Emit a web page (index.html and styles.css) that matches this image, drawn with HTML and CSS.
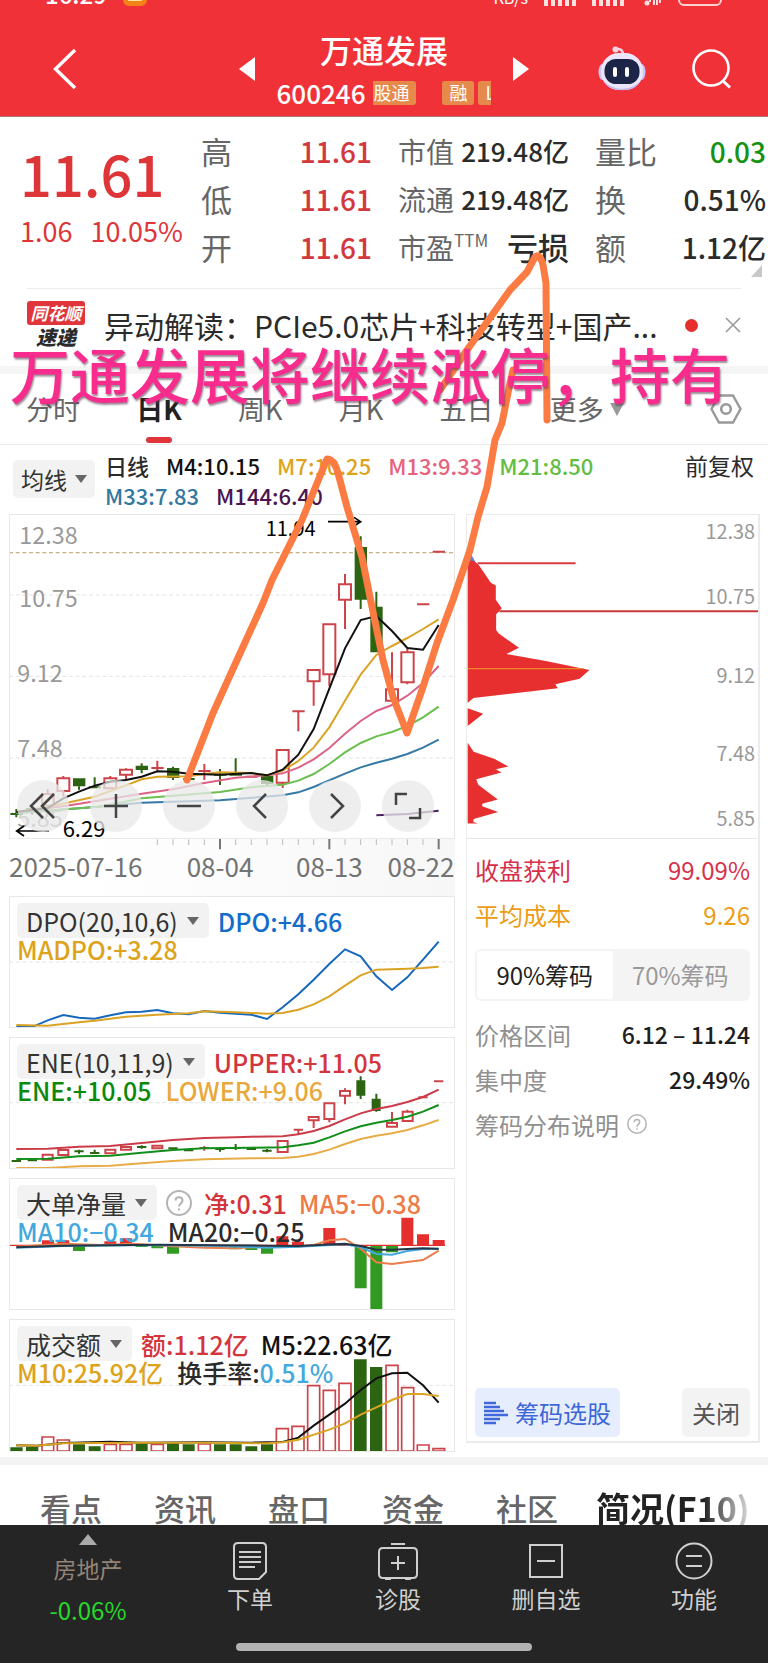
FILE: index.html
```html
<!DOCTYPE html>
<html lang="zh-CN">
<head>
<meta charset="utf-8">
<meta name="viewport" content="width=device-width, initial-scale=1">
<title>万通发展 600246</title>
<link rel="stylesheet" href="styles.css">
</head>
<body>
<div class="app">
<header class="header">
  <div class="status">
    <span class="clock">16:29</span>
    <span class="app-dot"></span>
    <span class="net">KB/s</span>
    <span class="signal"><i></i><i></i><i></i><i></i><i></i></span>
    <span class="signal"><i></i><i></i><i></i><i></i><i></i></span>
    <svg class="wifi" width="22" height="8" viewBox="0 0 22 8"><path d="M2 1h4M10 0v4M14 2v5M17 1v6M20 1v4" stroke="#ffe0e0" stroke-width="2"/><circle cx="7" cy="5" r="2.500" fill="#ffe0e0"/></svg>
    <span class="battery"></span>
  </div>
  <div class="titlebar">
    <button class="icon-btn back" aria-label="返回"><svg width="24" height="42" viewBox="0 0 24 42"><path d="M22 2 2.500 21 22 40" fill="none" stroke="#fff" stroke-width="3.400"/></svg></button>
    <div class="stock">
      <button class="icon-btn" aria-label="上一只"><svg width="16" height="24" viewBox="0 0 16 24"><path d="M16 0v24L0 12z" fill="#fff"/></svg></button>
      <div class="stock-name">
        <h1>万通发展</h1>
        <div class="code-row"><span>600246</span><span class="ribbon"><b class="tag cut-left">股通</b><b class="tag apart">融</b><b class="tag cut-right">L</b></span></div>
      </div>
      <button class="icon-btn" aria-label="下一只"><svg width="16" height="24" viewBox="0 0 16 24"><path d="M0 0v24l16-12z" fill="#fff"/></svg></button>
    </div>
    <div class="actions">
      <button class="icon-btn" aria-label="助手"><svg width="48" height="46" viewBox="0 0 48 46">
        <path d="M25 9c0-4-2-6-5-6" fill="none" stroke="#f6cfe4" stroke-width="2.500"/><circle cx="17.500" cy="3.500" r="3" fill="#fbd7e6"/>
        <ellipse cx="4.500" cy="26" rx="4" ry="8" fill="#c9c4f6"/><ellipse cx="43.500" cy="26" rx="4" ry="8" fill="#c9c4f6"/>
        <rect x="3" y="7" width="42" height="37" rx="18" fill="#ece6fb"/><path d="M7 36c8 9 26 9 34 0-3 11-31 11-34 0z" fill="#c3b6f2"/>
        <rect x="6.500" y="13" width="35" height="25" rx="11.500" fill="#1c2548"/><rect x="15" y="21" width="4" height="10" rx="2" fill="#fff"/><rect x="27" y="21" width="4" height="10" rx="2" fill="#fff"/></svg></button>
      <button class="icon-btn" aria-label="搜索"><svg width="40" height="40" viewBox="0 0 40 40"><circle cx="19" cy="19" r="17.500" fill="none" stroke="#fff" stroke-width="2.600"/><path d="m31 32 7 6.500" stroke="#fff" stroke-width="3"/></svg></button>
    </div>
  </div>
</header>

<section class="quote">
  <div class="price"><strong>11.61</strong><p><span>1.06</span><span>10.05%</span></p></div>
  <dl class="stats">
    <div><dt>高</dt><dd class="up">11.61</dd></div>
    <div><dt>低</dt><dd class="up">11.61</dd></div>
    <div><dt>开</dt><dd class="up">11.61</dd></div>
  </dl>
  <dl class="stats mid">
    <div><dt>市值</dt><dd>219.48亿</dd></div>
    <div><dt>流通</dt><dd>219.48亿</dd></div>
    <div><dt>市盈<sup>TTM</sup></dt><dd class="word">亏损</dd></div>
  </dl>
  <dl class="stats">
    <div><dt>量比</dt><dd class="down">0.03</dd></div>
    <div><dt>换</dt><dd>0.51%</dd></div>
    <div><dt>额</dt><dd>1.12亿</dd></div>
  </dl>
  <svg class="corner" width="11" height="12" viewBox="0 0 11 12"><path d="M11 0v12H0z" fill="#c8c8c8"/></svg>
</section>

<section class="news">
  <div class="news-logo"><span>同花顺</span><em>速递</em></div>
  <a href="#news">异动解读：PCIe5.0芯片+科技转型+国产...</a>
  <span class="dot"></span>
  <button class="icon-btn" aria-label="关闭资讯"><svg width="16" height="16" viewBox="0 0 16 16"><path d="m1 1 14 14M15 1 1 15" stroke="#999" stroke-width="1.600"/></svg></button>
</section>

<nav class="periods">
  <button>分时</button><button class="on">日K</button><button>周K</button><button>月K</button><button>五日</button><button class="more">更多<svg width="14" height="13" viewBox="0 0 14 13"><path d="M0 0h14L7 13z" fill="#999"/></svg></button>
  <button class="gear" aria-label="设置"><svg width="32" height="30" viewBox="0 0 32 30"><path d="M9 1.500h14L30.500 15 23 28.500H9L1.500 15z" fill="none" stroke="#999" stroke-width="2.400"/><circle cx="16" cy="15" r="4.800" fill="none" stroke="#999" stroke-width="2.600"/></svg></button>
</nav>

<section class="averages">
  <button class="pick">均线<i></i></button>
  <p><span>日线</span><span class="c-black">M4:10.15</span><span class="c-gold">M7:10.25</span><span class="c-pink">M13:9.33</span><span class="c-lime">M21:8.50</span><span class="c-steel">M33:7.83</span><span class="c-plum">M144:6.40</span></p>
  <button class="adjust">前复权</button>
</section>

<main class="board">
  <div class="charts">
    <figure class="panel kline">
      <svg viewBox="27 40 1338 975">
        <g class="grid"><path d="M27 283h1338M27 527h1338M27 772h1338"/></g>
        <path d="M27 156h1338" fill="none" stroke="#c9b184" stroke-width="4" stroke-dasharray="12 8"/>
        <g class="axis"><text x="58" y="131">12.38</text><text x="58" y="320">10.75</text><text x="52" y="545">9.12</text><text x="52" y="769">7.48</text><text x="52" y="978">5.85</text></g>
        <g class="wick green"><path d="M49 925v25M31 940h37M96 922v20M237 857v10M284 830v32M266 860h37M425 788v30M519 798v40M550 835h34M660 805v48M642 822h37M707 773v50M689 822h37M801 850v6M1082 107v218M1129 273v60"/></g>
        <g class="solid"><path d="M78 922h37v14H78zM219 833h37v24h-37zM407 795h37v13h-37zM501 802h37v30h-37zM783 825h37v25h-37zM1064 139h37v158h-37zM1111 318h37v137h-37z"/></g>
        <g class="wick red"><path d="M143 865v15M190 871v16M190 826v7M331 826v7M378 822v16M378 803v4M472 780v35M454 802h37M613 790v48M595 811h37M736 828h37M848 846v16M895 632v60M877 632h37M941 542v73M988 521v35M1035 220v31M1035 297v88M1176 455v111M1222 443v12M1222 545v6M1251 311h37M1298 153h37"/></g>
        <g class="hollow"><path d="M126 880h35v35h-35zM172 833h36v38h-36zM313 833h36v30h-36zM360 807h36v15h-36zM830 748h36v98h-36zM923 508h36v34h-36zM970 371h36v150h-36zM1017 251h36v46h-36zM1158 566h36v34h-36zM1204 455h37v90h-37z"/></g>
        <g class="lines">
          <path class="s-steel" d="M49 938 330 915 425 906 660 899 848 884 895 875 941 859 1035 819 1082 800 1129 786 1176 774 1222 760 1269 741 1316 717"/>
          <path class="s-lime" d="M49 936 300 918 425 893 660 874 754 860 848 852 895 840 941 820 988 790 1035 755 1082 727 1129 707 1176 694 1222 676 1269 650 1316 618"/>
          <path class="s-pink" d="M49 934 200 915 425 879 519 866 613 847 707 831 801 824 848 818 895 801 941 776 988 742 1035 699 1082 661 1129 631 1176 613 1222 585 1269 547 1316 496"/>
          <path class="s-gold" d="M49 934 160 915 284 888 378 854 425 836 472 828 566 827 613 820 660 815 754 817 801 824 848 810 895 781 941 741 988 680 1035 600 1082 522 1129 463 1176 436 1222 412 1269 385 1316 356"/>
          <path class="s-black" d="M49 934 143 922 190 893 237 873 284 855 331 843 378 838 425 828 472 812 519 813 566 819 660 822 754 817 801 824 848 807 895 762 941 685 988 564 1035 443 1082 358 1129 346 1176 391 1222 442 1269 447 1316 373"/>
          <path class="s-plum" d="M1129 944 1222 940 1316 930"/>
        </g>
        <g class="marks"><text x="797" y="107" font-size="60">11.94</text><path d="M984 63h98M1062 50l20 13-20 13M147 991H50M72 976l-22 15 22 15"/><text x="188" y="1008" font-size="66">6.29</text></g>
      </svg>
      <div class="tools">
        <button aria-label="最早"><svg viewBox="0 0 52 52"><path d="M37 14 25 26l12 12M26 14 14 26l12 12"/></svg></button>
        <button aria-label="放大"><svg viewBox="0 0 52 52"><path d="M26 14v24M14 26h24"/></svg></button>
        <button aria-label="缩小"><svg viewBox="0 0 52 52"><path d="M14 26h24"/></svg></button>
        <button aria-label="左移"><svg viewBox="0 0 52 52"><path d="M30 14 18 26l12 12"/></svg></button>
        <button aria-label="右移"><svg viewBox="0 0 52 52"><path d="m22 14 12 12-12 12"/></svg></button>
        <button aria-label="全屏"><svg viewBox="0 0 52 52"><path d="M14 25V14h11M38 28v10H27"/></svg></button>
      </div>
    </figure>
    <svg class="dates" viewBox="27 1015 1338 171">
      <path d="M472 1016v17M519 1016v17M566 1016v17M613 1016v17M707 1016v17M754 1016v17M801 1016v17M848 1016v17M895 1016v17M941 1016v17M1035 1016v17M1082 1016v17M1129 1016v17M1176 1016v17M1222 1016v17M1269 1016v17" stroke="#bbb" stroke-width="3"/>
      <path d="M660 1015v31M988 1015v31M1316 1015v31" stroke="#777" stroke-width="6"/>
      <text x="27" y="1130">2025-07-16</text><text x="660" y="1130" text-anchor="middle">08-04</text><text x="988" y="1130" text-anchor="middle">08-13</text><text x="1363" y="1130" text-anchor="end">08-22</text>
    </svg>

    <figure class="panel">
      <svg viewBox="27 46 1338 396">
        <g class="grid"><path d="M27 244h1338"/></g>
        <g class="lines"><path class="s-blue" d="M49 438 101 437 143 419 190 403 237 411 284 414 331 404 378 395 425 393 472 388 519 398 566 401 613 391 660 396 754 402 801 415 848 380 895 341 941 297 988 250 1035 206 1082 227 1129 287 1176 328 1222 290 1269 237 1316 183"/><path class="s-gold" d="M49 433 143 435 237 425 284 420 378 408 472 402 566 398 613 392 707 395 801 399 848 397 895 387 941 371 988 347 1035 315 1082 284 1129 267 1222 264 1269 262 1316 258"/></g>
      </svg>
      <figcaption><div><button class="pick">DPO(20,10,6)<i></i></button><span class="c-blue">DPO:+4.66</span></div><div><span class="c-gold">MADPO:+3.28</span></div></figcaption>
    </figure>

    <figure class="panel">
      <svg viewBox="27 470 1338 396">
        <g class="grid"><path d="M27 667h1338"/></g>
        <g class="wick green"><path d="M35 842h28M83 840h28M223 813h28M237 808v12M270 818h28M284 808v12M411 800h28M425 795v10M505 804h28M552 810h28M646 806h28M660 800v14M693 803h28M707 791v18M740 806h28M787 811h28M801 806v10M1082 588v68M1129 640v54"/></g>
        <g class="solid"><path d="M1069 600h27v46h-27zM1115 655h27v37h-27z"/></g>
        <g class="wick red"><path d="M599 803h28M613 797v14M881 748h28M895 745v17M941 720v23M988 716v10M1035 624v48M1176 695v33M1222 688v6M1255 651h28M1302 603h28"/></g>
        <g class="hollow"><path d="M128 823h30v15h-30zM175 809h30v15h-30zM316 808h30v11h-30zM363 800h30v8h-30zM457 796h30v8h-30zM833 782h30v33h-30zM926 710h30v10h-30zM973 669h30v47h-30zM1020 632h30v14h-30zM1161 728h30v11h-30zM1208 694h30v28h-30z"/></g>
        <g class="lines"><path class="s-red" d="M49 806 143 805 237 799 331 797 425 788 519 779 613 773 707 771 754 769 848 768 895 762 941 752 988 737 1035 717 1082 699 1129 686 1176 677 1222 665 1269 650 1316 628"/><path class="s-green" d="M49 836 143 835 237 828 331 826 425 817 519 809 613 804 754 802 848 801 895 795 941 787 988 771 1035 753 1082 738 1129 727 1176 719 1222 709 1269 694 1316 674"/><path class="s-amber" d="M49 863 143 863 237 858 331 856 425 849 519 842 613 837 754 834 848 833 895 829 941 821 988 808 1035 791 1082 776 1129 766 1176 759 1222 749 1269 735 1316 719"/></g>
      </svg>
      <figcaption><div><button class="pick">ENE(10,11,9)<i></i></button><span class="c-red">UPPER:+11.05</span></div><div><span class="c-green">ENE:+10.05</span><span class="c-amber">LOWER:+9.06</span></div></figcaption>
    </figure>

    <figure class="panel">
      <svg viewBox="27 25 1338 396">
        <g fill="#e52f2f"><path d="M126 212h36v15h-36zM172 212h36v15h-36zM313 215h36v12h-36zM360 206h36v21h-36zM829 200h36v27h-36zM876 216h36v11h-36zM970 175h36v52h-36zM1204 144h36v83h-36zM1251 194h36v33h-36zM1298 211h36v16h-36z"/></g>
        <g fill="#309b20"><path d="M219 227h36v17h-36zM407 227h36v5h-36zM454 227h36v9h-36zM501 227h36v25h-36zM689 227h36v12h-36zM736 227h36v14h-36zM783 227h36v25h-36zM1064 227h36v129h-36zM1111 227h36v192h-36zM1158 227h36v21h-36z"/></g>
        <path d="M27 227h1308" stroke="#e52f2f" stroke-width="4"/>
        <g class="lines"><path class="s-orange" d="M49 231 190 222 300 226 400 222 519 230 613 234 707 236 801 230 895 231 941 226 988 212 1035 208 1082 237 1129 278 1176 283 1222 277 1269 271 1316 243"/><path class="s-sky" d="M49 234 190 229 472 226 660 229 801 234 895 231 1035 224 1082 232 1129 253 1176 255 1222 244 1269 238 1316 238"/><path class="s-navy" d="M49 233 190 228 472 225 660 227 801 228 895 229 1035 222 1082 229 1129 240 1176 240 1269 236 1316 237"/></g>
      </svg>
      <figcaption><div><button class="pick">大单净量<i></i></button><svg class="help" viewBox="0 0 26 26"><circle cx="13" cy="13" r="12"/><path d="M9.500 10.500c0-4.500 7-4.500 7 0 0 3-3.500 3-3.500 6M13 18.500v2"/></svg><span class="c-red">净:0.31</span><span class="c-orange">MA5:−0.38</span></div><div><span class="c-sky">MA10:−0.34</span><span>MA20:−0.25</span></div></figcaption>
    </figure>

    <figure class="panel">
      <svg viewBox="27 448 1338 400">
        <g class="grid"><path d="M27 647h1338"/></g>
        <g class="solid"><path d="M31 833h37v13H31zM78 832h37v14H78zM219 824h36v22h-36zM266 830h36v16h-36zM407 823h36v23h-36zM501 821h36v25h-36zM548 824h36v22h-36zM642 824h36v22h-36zM689 824h36v22h-36zM736 830h36v16h-36zM783 824h36v22h-36zM1062 569h38v277h-38zM1110 592h37v254h-37z"/></g>
        <g class="hollow thin"><path d="M126 802h35v42h-35zM172 811h36v33h-36zM313 824h36v20h-36zM360 824h36v20h-36zM454 824h36v20h-36zM595 823h36v21h-36zM829 777h36v67h-36zM876 770h36v74h-36zM923 648h36v196h-36zM970 662h36v182h-36zM1017 641h36v203h-36zM1158 587h36v257h-36zM1205 654h36v190h-36zM1252 826h35v18h-35zM1299 837h35v7h-35z"/></g>
        <g class="lines"><path class="s-black" d="M49 827 110 828 190 820 331 816 425 819 613 818 754 819 848 817 895 804 941 768 1035 702 1082 661 1129 626 1176 611 1222 609 1269 647 1316 699"/><path class="s-gold" d="M49 827 110 828 190 821 425 819 613 819 801 821 848 818 895 810 988 780 1035 761 1082 735 1129 713 1176 691 1222 673 1269 673 1316 679"/></g>
      </svg>
      <figcaption><div><button class="pick">成交额<i></i></button><span class="c-red">额:1.12亿</span><span class="c-black">M5:22.63亿</span></div><div><span class="c-gold">M10:25.92亿</span><span>换手率:<span class="c-sky">0.51%</span></span></div></figcaption>
    </figure>
  </div>

  <aside class="chips">
    <svg class="profile" viewBox="78 40 879 975">
      <path d="M80 140v50h28z" fill="#5c7fd0"/>
      <path d="M80 175 100 180 113 190 150 245 165 253 165 296 183 322 173 333 166 340 166 387 174 398 235 441 197 460 320 482 448 508 418 535 345 551 352 563 97 593 80 608zM80 624 127 640 80 677zM80 728 98 755 160 776 203 800 165 808 182 818 106 838 112 855 171 899 124 912 124 920 172 937 98 958 97 967 111 972 80 972z" fill="#e72f2f"/>
      <path d="M110 186h296" stroke="#d83c40" stroke-width="6"/><path d="M176 331h781" stroke="#c9383c" stroke-width="6"/><path d="M80 504h350" stroke="#f0862a" stroke-width="4"/>
      <g class="axis"><text x="948" y="113">12.38</text><text x="948" y="310">10.75</text><text x="948" y="546">9.12</text><text x="948" y="783">7.48</text><text x="948" y="980">5.85</text></g>
    </svg>
    <div class="chip-body">
      <p class="c-rose"><span>收盘获利</span><b>99.09%</b></p>
      <p class="c-yellow"><span>平均成本</span><b>9.26</b></p>
      <div class="segment"><button class="on">90%筹码</button><button>70%筹码</button></div>
      <p class="range"><span>价格区间</span><b>6.12 – 11.24</b></p>
      <p class="range"><span>集中度</span><b>29.49%</b></p>
      <p class="explain"><span>筹码分布说明</span><svg class="help" viewBox="0 0 26 26"><circle cx="13" cy="13" r="12"/><path d="M9.500 10.500c0-4.500 7-4.500 7 0 0 3-3.500 3-3.500 6M13 18.500v2"/></svg></p>
    </div>
    <div class="chip-foot">
      <button class="select"><svg width="24" height="24" viewBox="0 0 24 24"><path d="M0 2h12M0 6h16M0 10h20M0 14h24M0 18h16M0 22h12" stroke="#3f68dc" stroke-width="2.400"/></svg>筹码选股</button>
      <button class="close">关闭</button>
    </div>
  </aside>
</main>

<nav class="sections"><a href="#a">看点</a><a href="#b">资讯</a><a href="#c">盘口</a><a href="#d">资金</a><a href="#e">社区</a><a href="#f" class="on">简况(F10)</a></nav>

<footer class="bottom">
  <nav>
    <button class="sector"><svg width="18" height="11" viewBox="0 0 18 11"><path d="M9 0l9 11H0z" fill="#aaa"/></svg><span>房地产</span><b>-0.06%</b></button>
    <button><svg width="36" height="40" viewBox="0 0 36 40"><path d="M6 2h24q4 0 4 4v25l-7 7H6q-4 0-4-4V6q0-4 4-4zM7 11h22M7 16h22M7 21h22M7 26h16"/></svg><span>下单</span></button>
    <button><svg width="40" height="40" viewBox="0 0 40 40"><path d="M5 7h30q4 0 4 4v22q0 4-4 4H5q-4 0-4-4V11q0-4 4-4zM13 3h14M20 15v14M13 22h14M7 38h6M27 38h6"/></svg><span>诊股</span></button>
    <button><svg width="34" height="40" viewBox="0 0 34 40"><path d="M1 4h32v32H1zM8 20h18"/></svg><span>删自选</span></button>
    <button><svg width="38" height="40" viewBox="0 0 38 40"><circle cx="19" cy="20" r="17.500"/><path d="M11 15h16M11 25h16"/></svg><span>功能</span></button>
  </nav>
  <div class="home"></div>
</footer>

<svg class="sketch" width="768" height="800" viewBox="0 0 768 800"><path d="M187 780 213 713 237 660 263 603 272 580 287 550 302 520 313 493 327 459Q334 459 338 473L347 507 362 557 372 607 383 660 393 697 407 733 423 687 437 643 453 600 470 550 478 517 487 487 495 440 502 423 510 383 513 370M440 390 467 350 510 290 527 272 535 257Q540 253 543 265L546 283 547 420"/></svg>
<p class="caption">万通发展将继续涨停，持有</p>
</div>
</body>
</html>
```
FILE: styles.css
```css
* { box-sizing: border-box; }
body { margin: 0; background: #fff; color: #2b2b2b; font-family: "Noto Sans CJK SC", "Noto Sans", sans-serif; }
h1, p, dl, dd, figure { margin: 0; }
button { border: 0; padding: 0; background: none; color: inherit; font: inherit; }
a { color: inherit; text-decoration: none; }
svg { display: block; }
.app { position: relative; overflow: hidden; }

.header { background: #f03238; color: #fff; }
.status { display: flex; align-items: flex-end; gap: 16px; height: 8px; padding: 0 46px 2px 45px; overflow: hidden; }
.clock { font-size: 24px; line-height: 24px; font-weight: 500; }
.app-dot { width: 24px; height: 24px; border: 5px solid #f58216; border-radius: 6px; background: #ffe9a0; }
.net { margin-left: auto; font-size: 16px; line-height: 18px; }
.signal { display: flex; gap: 3px; width: 32px; height: 12px; }
.signal i { flex: 1; background: #ffe0e0; }
.battery { flex: none; width: 44px; height: 20px; border: 2px solid #ffd0d0; border-radius: 6px; }
.titlebar { display: grid; grid-template-columns: 1fr 290px 1fr; align-items: center; height: 109px; padding-top: 13px; border-bottom: 1px solid #b0787a; }
.icon-btn { display: block; flex: none; }
.back { margin-left: 53px; }
.stock { display: flex; align-items: center; justify-content: space-between; }
.stock-name { display: flex; flex-direction: column; align-items: center; }
.stock-name h1 { font-size: 32px; line-height: 48px; font-weight: 500; }
.code-row { display: flex; align-items: center; gap: 8px; font-size: 26px; line-height: 40px; font-weight: 500; }
.ribbon { display: flex; width: 118px; overflow: hidden; }
.tag { flex: none; height: 24px; padding: 0 7px; border-radius: 3px; background: #e68a4b; font-size: 18px; line-height: 23px; font-weight: 400; }
.cut-left { padding-left: 0; border-radius: 0 3px 3px 0; }
.apart { margin: 0 4px 0 26px; }
.actions { display: flex; align-items: center; justify-content: flex-end; gap: 46px; padding-right: 36px; }

.quote { position: relative; display: grid; grid-template-columns: 155px 1fr 1fr 1fr; column-gap: 26px; padding: 10px 2px 17px 20px; }
.price { color: #de3538; white-space: nowrap; }
.price strong { display: block; padding-top: 8px; font-size: 56px; line-height: 76px; font-weight: 500; }
.price p { display: flex; gap: 18px; font-size: 27px; line-height: 40px; }
.stats div { display: flex; justify-content: space-between; line-height: 48px; white-space: nowrap; }
.stats dt { color: #666; font-size: 31px; }
.stats dd { font-size: 28px; font-weight: 500; }
.stats .up { color: #d2383c; }
.stats .down { color: #149214; }
.mid dt { display: flex; font-size: 28px; }
.mid dd { font-size: 26px; }
.mid sup { font-size: 17px; line-height: 34px; }
.mid .word { font-size: 31px; }
.corner { position: absolute; right: 6px; bottom: 11px; }

.news { display: flex; align-items: center; height: 78px; margin: 0 27px; padding-bottom: 5px; border-top: 1px solid #ececec; }
.news-logo { width: 58px; margin-right: 19px; text-align: center; font-style: italic; font-weight: 900; }
.news-logo span { display: block; border-radius: 3px; background: #e0353a; color: #fff; font-size: 17px; line-height: 24px; font-weight: 700; }
.news-logo em { display: block; font-size: 20px; line-height: 24px; }
.news a { flex: 1; font-size: 30px; line-height: 40px; white-space: nowrap; }
.dot { width: 13px; height: 13px; margin-right: 27px; border-radius: 50%; background: #e52f2f; }

.periods { display: flex; align-items: center; justify-content: space-between; height: 79px; padding: 0 26px; border-top: 8px solid #f5f5f5; border-bottom: 1px solid #eaeaea; color: #666; font-size: 27px; line-height: 40px; }
.periods button { position: relative; }
.periods .on { color: #222; font-weight: 700; }
.periods .on::after { content: ""; position: absolute; left: 50%; bottom: -14px; width: 26px; height: 6px; margin-left: -13px; border-radius: 3px; background: #e0343a; }
.more { display: flex; align-items: center; gap: 6px; }
.gear { margin-left: 30px; }

.pick { display: inline-flex; align-items: center; border-radius: 5px; background: #f2f2f2; color: #333; white-space: nowrap; }
.pick i { border: solid transparent; border-width: 8px 6px 0; border-top-color: #666; }
.averages { display: flex; align-items: flex-start; height: 69px; padding: 5px 14px 0 13px; font-size: 23px; line-height: 30px; }
.averages .pick { height: 38px; gap: 8px; margin: 10px 10px 0 0; padding: 0 8px; }
.averages p { display: flex; flex: 1; flex-wrap: wrap; column-gap: 17px; max-width: 520px; font-size: 22px; font-weight: 500; }
.adjust { margin-left: auto; }

.board { display: grid; grid-template-columns: 446fr 294fr; gap: 11px; padding: 0 8px 0 9px; }
.charts { display: flex; flex-direction: column; min-width: 0; }
.panel { position: relative; margin-bottom: 9px; outline: 1px solid #e8e8e8; outline-offset: -1px; }
.kline { margin-bottom: 0; }
.panel:last-child { margin-bottom: 5px; }
.panel > svg, .dates, .profile { width: 100%; height: auto; }
.grid path { stroke: #e4e4e4; stroke-width: 3; stroke-dasharray: 12 8; }
.axis { fill: #999; font-size: 70px; }
.profile .axis { font-size: 60px; text-anchor: end; }
.wick path { fill: none; stroke-width: 6; }
.wick.green path { stroke: #2c6412; }
.wick.red path { stroke: #cc444a; }
.solid { fill: #2c6412; }
.hollow path { fill: #fff; stroke: #cc444a; stroke-width: 6; }
.hollow.thin path { stroke-width: 5; }
.lines path { fill: none; stroke-width: 6; }
.marks text { fill: #000; }
.marks path { fill: none; stroke: #000; stroke-width: 5; }
.tools { position: absolute; left: 8px; bottom: 7px; display: flex; gap: 21px; }
.tools button { width: 52px; height: 52px; border-radius: 50%; background: rgba(232, 232, 232, .76); }
.tools path { fill: none; stroke: #444; stroke-width: 2.5; }
.dates { background: linear-gradient(90deg, #fff 15%, #f7f7f7); fill: #737373; font-size: 78px; }
.panel figcaption { position: absolute; top: 8px; left: 8px; font-size: 25px; white-space: nowrap; font-weight: 500; }
.panel figcaption div { display: flex; align-items: center; gap: 12px; height: 33px; line-height: 24px; }
.panel figcaption div + div { gap: 14px; height: 24px; }
.panel .pick { height: 35px; margin-right: -3px; padding: 0 10px 0 9px; gap: 9px; font-weight: 400; }
.help { width: 26px; height: 26px; fill: none; stroke: #b4b4b4; stroke-width: 2; }

.chips { display: flex; flex-direction: column; margin-bottom: 14px; border: solid #ebebeb; border-width: 1px 2px 2px 1px; }
.profile { border-bottom: 1px solid #e8e8e8; }
.chip-body { padding: 8px 8px 0; font-size: 24px; }
.chip-body p { display: flex; align-items: center; justify-content: space-between; line-height: 45px; color: #909090; }
.chip-body b { color: #1f1f1f; font-weight: 500; }
.chip-body .range b { font-size: 23px; }
.chip-body .c-rose, .c-rose b { color: #d6304a; }
.chip-body .c-yellow, .c-yellow b { color: #eb9c14; }
.chip-body .c-rose b, .chip-body .c-yellow b { color: inherit; font-weight: 400; }
.segment { display: flex; height: 52px; margin: 12px 0 11px; padding: 2px; border-radius: 6px; background: #f4f4f4; color: #999; }
.segment button { flex: 1; }
.segment .on { border-radius: 4px; background: #fff; color: #222; }
.chip-body .explain { justify-content: flex-start; gap: 8px; }
.explain .help { width: 20px; height: 20px; }
.chip-foot { display: flex; justify-content: space-between; margin-top: auto; padding: 0 8px 4px; font-size: 24px; line-height: 49px; }
.select { display: flex; align-items: center; gap: 7px; padding: 0 9px; border-radius: 5px; background: #e6edfc; color: #3d66d8; }
.close { padding: 0 10px; border-radius: 5px; background: #f3f3f3; color: #555; }

.sections { display: flex; gap: 52px; height: 68px; padding: 19px 0 0 40px; overflow: hidden; border-top: 8px solid #f4f4f4; color: #666; font-size: 31px; line-height: 48px; white-space: nowrap; font-weight: 500; }
.sections .on { margin-left: -14px; background: linear-gradient(90deg, #222 70%, #ddd); background-clip: text; color: transparent; font-size: 34px; font-weight: 700; }

.bottom { height: 138px; background: #252525; color: #d0d0d0; }
.bottom nav { display: grid; grid-template-columns: 176px repeat(4, 1fr); height: 118px; font-size: 23px; line-height: 30px; }
.bottom button { display: flex; flex-direction: column; align-items: center; padding-top: 16px; gap: 2px; }
.bottom button svg { fill: none; stroke: #cfcfcf; stroke-width: 2; }
.bottom .sector { padding-top: 9px; gap: 8px; color: #938477; }
.bottom .sector svg { stroke: none; }
.sector b { color: #26da2c; font-size: 24px; font-weight: 400; margin-top: 4px; }
.home { width: 296px; height: 8px; margin: 0 auto; border-radius: 4px; background: #b2b2b2; }

.sketch { position: absolute; top: 0; left: 0; pointer-events: none; }
.sketch path { fill: none; stroke: #fb7b43; stroke-width: 7; stroke-linecap: round; stroke-linejoin: round; }
.caption { position: absolute; top: 335px; left: 10px; color: #f72c8d; font-size: 60px; line-height: 76px; font-weight: 500; white-space: nowrap; text-shadow: 1px 2px 2px rgba(90, 60, 80, .6); pointer-events: none; }

.c-black { color: #111; } .s-black { stroke: #111; }
.c-gold { color: #dda31b; } .s-gold { stroke: #dba324; }
.c-pink { color: #e5637d; } .s-pink { stroke: #db6386; }
.c-lime { color: #62bd42; } .s-lime { stroke: #6abf4f; }
.c-steel { color: #34789f; } .s-steel { stroke: #3579a4; }
.c-plum { color: #4c1450; } .s-plum { stroke: #4c2264; }
.c-blue { color: #126dcb; } .s-blue { stroke: #1768bd; }
.c-red { color: #d3353d; } .s-red { stroke: #cb3c48; }
.c-green { color: #0b890b; } .s-green { stroke: #128e1a; }
.c-amber { color: #e9a83b; } .s-amber { stroke: #e8ac47; }
.c-orange { color: #ee7b45; } .s-orange { stroke: #e97d4b; }
.c-sky { color: #43a8dd; } .s-sky { stroke: #43a8dd; }
.s-navy { stroke: #233746; }
```
